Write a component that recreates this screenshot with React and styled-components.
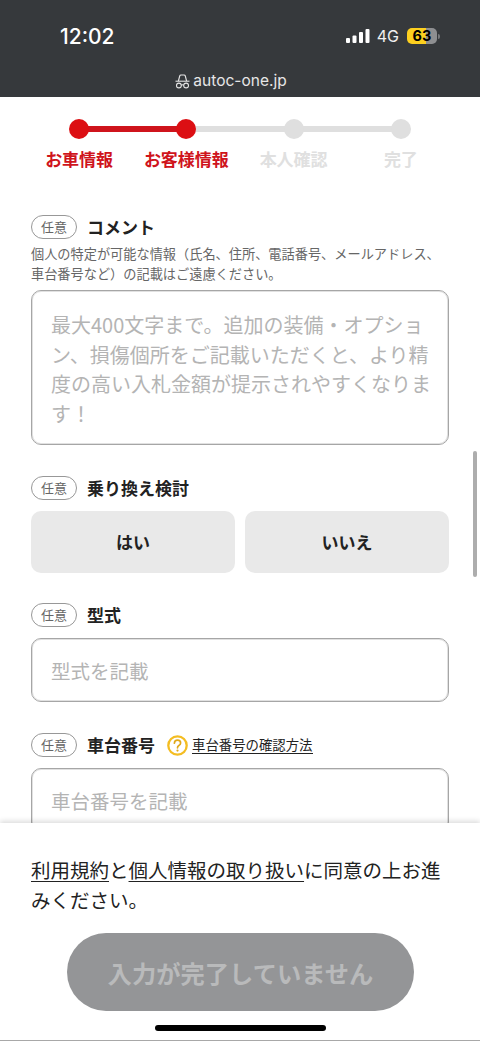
import React from 'react';
import styled, { createGlobalStyle } from 'styled-components';

const GlobalStyle = createGlobalStyle`
  html, body {
    margin: 0;
    padding: 0;
    background: #fff;
  }
  * {
    box-sizing: border-box;
  }
  body {
    font-family: "Noto Sans CJK JP", "Noto Sans", sans-serif;
  }
`;

const Page = styled.div`
  position: relative;
  display: flex;
  flex-direction: column;
  width: 480px;
  height: 1041px;
  overflow: hidden;
  border-bottom: 1px solid #a8a8a8;
`;

const Header = styled.header`
  flex: none;
  height: 97px;
  padding: 0 40px 0 60px;
  background: #36393c;
  color: #fff;
`;

const StatusBar = styled.div`
  display: flex;
  align-items: center;
  justify-content: space-between;
  height: 72px;
`;

const Time = styled.div`
  font-family: Inter, sans-serif;
  font-size: 21px;
  font-weight: 500;
`;

const StatusIcons = styled.div`
  display: flex;
  align-items: center;
`;

const Network = styled.span`
  margin: 0 8px 0 7px;
  font-family: Inter, sans-serif;
  font-size: 16px;
  color: #f0f0f0;
`;

const Battery = styled.div`
  width: 30px;
  height: 16px;
  border-radius: 5px;
  overflow: hidden;
  background: linear-gradient(to right, #fdd01f 63%, #8e8f91 63%);
  color: #000;
  font-family: Inter, sans-serif;
  font-size: 14.5px;
  font-weight: 700;
  line-height: 16px;
  text-align: center;
`;

const BatteryCap = styled.div`
  width: 2px;
  height: 5px;
  margin-left: 1px;
  border-radius: 0 2px 2px 0;
  background: #77797b;
`;

const Address = styled.div`
  display: flex;
  align-items: center;
  justify-content: center;
  gap: 3px;
  margin-left: -38px;
  color: #e6e6e6;
  font-family: Inter, sans-serif;
  font-size: 15.5px;
  line-height: 18px;
`;

const Content = styled.main`
  flex: 1;
  min-height: 0;
  overflow: hidden;
`;

const Stepper = styled.ol`
  display: grid;
  grid-template-columns: repeat(4, 107.25px);
  margin: 0 0 46px;
  padding: 22px 0 0 25.5px;
  list-style: none;
`;

const Step = styled.li`
  position: relative;
  display: flex;
  flex-direction: column;
  align-items: center;
  gap: 10px;
  color: ${(p) => (p.$active ? '#cf141c' : '#e0e0e0')};

  &:not(:last-child)::after {
    content: '';
    position: absolute;
    top: 7px;
    left: 50%;
    width: 100%;
    height: 6px;
    background: ${(p) => (p.$lineActive ? '#cf141c' : '#dfdfdf')};
  }
`;

const Dot = styled.span`
  position: relative;
  z-index: 1;
  width: 20px;
  height: 20px;
  border-radius: 50%;
  background: ${(p) => (p.$active ? '#dc0f13' : '#dfdfdf')};
`;

const StepLabel = styled.span`
  font-size: 17px;
  font-weight: 700;
  line-height: 20px;
  white-space: nowrap;
`;

const Form = styled.div`
  display: flex;
  flex-direction: column;
  padding: 0 31px;
`;

const Field = styled.section`
  margin-bottom: ${(p) => p.$gap}px;
`;

const LabelRow = styled.div`
  display: flex;
  align-items: center;
  height: 24px;
  margin-bottom: ${(p) => p.$gap ?? 10.5}px;
`;

const Optional = styled.span`
  flex: none;
  width: 46px;
  height: 24px;
  margin-right: 10px;
  border: 1px solid #989898;
  border-radius: 12px;
  color: #666;
  font-size: 13px;
  line-height: 22px;
  text-align: center;
`;

const Title = styled.h2`
  margin: 0;
  color: #222;
  font-size: 17px;
  font-weight: 700;
  line-height: 24px;
`;

const Note = styled.p`
  margin: 5px 0 6px;
  color: #666;
  font-size: 13.2px;
  line-height: 20px;
`;

const TextBox = styled.textarea`
  display: block;
  width: 100%;
  height: 155px;
  padding: 19px 16px 19px 19px;
  border: 1px solid #a6a6a6;
  border-radius: 10px;
  outline: none;
  resize: none;
  background: #fff;
  box-shadow: inset 0 0 0 1px rgba(170, 170, 170, 0.35);
  font-family: inherit;
  font-size: 20px;
  line-height: 29.5px;

  &::placeholder {
    color: #b4b4b4;
    opacity: 1;
  }
`;

const TextInput = styled.input`
  display: block;
  width: 100%;
  height: 64.5px;
  padding: 2px 19px 0;
  border: 1px solid #a6a6a6;
  border-radius: 10px;
  outline: none;
  background: #fff;
  box-shadow: inset 0 0 0 1px rgba(170, 170, 170, 0.35);
  font-family: inherit;
  font-size: 19.5px;

  &::placeholder {
    color: #b4b4b4;
    opacity: 1;
  }
`;

const Choices = styled.div`
  display: grid;
  grid-template-columns: 1fr 1fr;
  gap: 10px;
`;

const Choice = styled.button`
  height: 62.5px;
  border: 0;
  border-radius: 10px;
  background: #e9e9e9;
  color: #222;
  font-family: inherit;
  font-size: 17px;
  font-weight: 700;
`;

const HelpLink = styled.a`
  display: flex;
  align-items: center;
  gap: 4px;
  margin-left: 12px;
  color: #222;
  font-size: 13.4px;
  line-height: 20px;

  span {
    border-bottom: 1px solid #222;
    line-height: 17px;
  }
`;

const Footer = styled.footer`
  position: relative;
  z-index: 2;
  flex: none;
  height: 217px;
  padding: 32px 31px 0;
  background: #fff;
  box-shadow: 0 -2px 5px rgba(0, 0, 0, 0.14);
`;

const Agreement = styled.p`
  margin: 0 0 18px;
  color: #222;
  font-size: 19.5px;
  line-height: 30px;

  a {
    color: inherit;
    text-decoration: underline;
    text-underline-offset: 3px;
    text-decoration-thickness: 1px;
  }
`;

const Submit = styled.button`
  display: block;
  width: 347px;
  height: 78px;
  margin: 0 0 0 36px;
  border: 0;
  border-radius: 39px;
  background: #949597;
  color: #b9babb;
  font-family: inherit;
  font-size: 24.3px;
  font-weight: 700;
`;

const HomeBar = styled.div`
  position: absolute;
  z-index: 3;
  left: 155px;
  bottom: 9px;
  width: 171px;
  height: 6px;
  border-radius: 3px;
  background: #000;
`;

const ScrollThumb = styled.div`
  position: absolute;
  top: 451px;
  left: 473px;
  width: 3.5px;
  height: 126px;
  border-radius: 2px;
  background: #adadad;
`;

const Signal = () => (
  <svg width="24" height="16" viewBox="0 0 24 16" fill="#fff">
    <rect x="0" y="10" width="4" height="5" rx="1" />
    <rect x="6.5" y="7.5" width="4" height="7.5" rx="1" />
    <rect x="13" y="4" width="4" height="11" rx="1" />
    <rect x="19.5" y="1" width="4" height="14" rx="1" />
  </svg>
);

const Incognito = () => (
  <svg width="15" height="15" viewBox="0 0 15 15" fill="none" stroke="#e6e6e6" strokeWidth="1.1">
    <path d="M3.4 7 L4.7 2 Q5 1 6 1 H9 Q10 1 10.3 2 L11.6 7" />
    <path d="M0.5 7.2 H14.5" />
    <circle cx="3.9" cy="11.5" r="2.4" />
    <circle cx="11.1" cy="11.5" r="2.4" />
    <path d="M6.3 11.2 Q7.5 10.3 8.7 11.2" />
  </svg>
);

const HelpIcon = () => (
  <svg width="21" height="21" viewBox="0 0 21 21" fill="none">
    <circle cx="10.5" cy="10.5" r="9.2" stroke="#f4bd22" strokeWidth="2.3" />
    <path d="M7.4 8.2 Q7.5 5.2 10.5 5.2 Q13.6 5.2 13.6 7.9 Q13.6 9.4 11.9 10.4 Q10.5 11.2 10.5 12.8" stroke="#e0a91a" strokeWidth="1.7" strokeLinecap="round" />
    <circle cx="10.5" cy="15.6" r="1.1" fill="#e0a91a" />
  </svg>
);

const steps = [
  { label: 'お車情報', active: true, lineActive: true },
  { label: 'お客様情報', active: true },
  { label: '本人確認' },
  { label: '完了' },
];

const App = () => (
  <Page>
    <GlobalStyle />
    <Header>
      <StatusBar>
        <Time>12:02</Time>
        <StatusIcons>
          <Signal />
          <Network>4G</Network>
          <Battery>63</Battery>
          <BatteryCap />
        </StatusIcons>
      </StatusBar>
      <Address>
        <Incognito />
        autoc-one.jp
      </Address>
    </Header>
    <Content>
      <Stepper>
        {steps.map((step) => (
          <Step key={step.label} $active={step.active} $lineActive={step.lineActive}>
            <Dot $active={step.active} />
            <StepLabel>{step.label}</StepLabel>
          </Step>
        ))}
      </Stepper>
      <Form>
        <Field $gap={31}>
          <LabelRow $gap={0}>
            <Optional>任意</Optional>
            <Title>コメント</Title>
          </LabelRow>
          <Note>
            個人の特定が可能な情報（氏名、住所、電話番号、メールアドレス、車台番号など）の記載はご遠慮ください。
          </Note>
          <TextBox
            readOnly
            placeholder="最大400文字まで。追加の装備・オプション、損傷個所をご記載いただくと、より精度の高い入札金額が提示されやすくなります！"
          />
        </Field>
        <Field $gap={30}>
          <LabelRow>
            <Optional>任意</Optional>
            <Title>乗り換え検討</Title>
          </LabelRow>
          <Choices>
            <Choice type="button">はい</Choice>
            <Choice type="button">いいえ</Choice>
          </Choices>
        </Field>
        <Field $gap={31}>
          <LabelRow>
            <Optional>任意</Optional>
            <Title>型式</Title>
          </LabelRow>
          <TextInput readOnly placeholder="型式を記載" />
        </Field>
        <Field $gap={0}>
          <LabelRow>
            <Optional>任意</Optional>
            <Title>車台番号</Title>
            <HelpLink>
              <HelpIcon />
              <span>車台番号の確認方法</span>
            </HelpLink>
          </LabelRow>
          <TextInput readOnly placeholder="車台番号を記載" />
        </Field>
      </Form>
    </Content>
    <Footer>
      <Agreement>
        <a>利用規約</a>と<a>個人情報の取り扱い</a>に同意の上お進みください。
      </Agreement>
      <Submit type="button">入力が完了していません</Submit>
    </Footer>
    <ScrollThumb />
    <HomeBar />
  </Page>
);

export default App;
